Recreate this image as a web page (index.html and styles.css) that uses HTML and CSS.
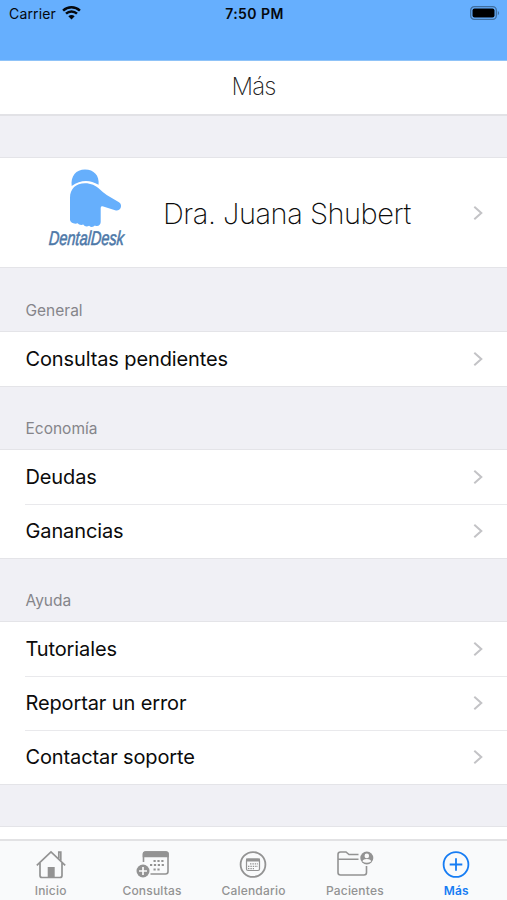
FILE: index.html
```html
<!DOCTYPE html>
<html lang="es">
<head>
<meta charset="utf-8">
<title>DentalDesk</title>
<link rel="stylesheet" href="styles.css">
</head>
<body>
<div class="app">
  <header class="status">
    <div class="carrier"><span>Carrier</span>
      <svg width="19" height="14" viewBox="0 0 19 14"><path d="M1.100 4.600C5.800.2 13.200.2 17.900 4.600M4 7.700c3.100-2.900 7.900-2.900 11 0" fill="none" stroke="#05080d" stroke-width="2.500"/><path d="M6.300 10.300Q9.500 7.600 12.700 10.300L9.500 13.500Z" fill="#05080d"/></svg>
    </div>
    <div class="time">7:50 PM</div>
    <svg class="battery" width="30" height="14" viewBox="0 0 30 14"><rect x=".7" y=".7" width="25.600" height="12.600" rx="3.600" fill="none" stroke="#3f6e9f" stroke-width="1.300"/><rect x="2.500" y="2.500" width="22" height="9" rx="2" fill="#000"/><path d="M27.800 4.700q2.600 2.300 0 4.600z" fill="#3f6e9f"/></svg>
  </header>
  <h1 class="title"><span>Más</span></h1>
  <main class="content">
    <section class="profile">
      <svg class="logo" width="82" height="86" viewBox="0 0 82 86">
        <path d="M24.700 20C23.500 10 29 3.500 38 3.500S52.500 9.500 51.600 18.800Q38 10.500 24.700 20Z" fill="#66affc"/>
        <path d="M23 32C23 22.500 29 17.300 38 17.300c6 0 10.500 2.200 15 6.200q3 3 6.700 5.500L72 36.300c2.300 1.400 2.400 3.800 1.600 5.700-.9 2.100-3.100 2.900-5.500 2.200L55.500 40.300Q53.700 39.800 53.700 42V56c0 3-2.700 5-5.800 3.500-1.500 1.600-4 2-5.800.2-2 1.300-4.600.9-5.800-1.200-2 1-4.500.3-5.500-1.200-3.500 1-7.600-.3-7.800-3.800Q23 42 23 32z" fill="#66affc"/>
        <text class="logo-text" transform="translate(1.500 78.500) skewX(-4)" textLength="75" lengthAdjust="spacingAndGlyphs">DentalDesk</text>
      </svg>
      <div class="name"><span>Dra. Juana Shubert</span></div>
      <svg class="chevron" viewBox="0 0 10 16"><path d="m1.300 1.800 7 6.200-7 6.200"/></svg>
    </section>
    <h2>General</h2>
    <ul>
      <li><span>Consultas pendientes</span><svg class="chevron" viewBox="0 0 10 16"><path d="m1.300 1.800 7 6.200-7 6.200"/></svg></li>
    </ul>
    <h2>Economía</h2>
    <ul>
      <li><span>Deudas</span><svg class="chevron" viewBox="0 0 10 16"><path d="m1.300 1.800 7 6.200-7 6.200"/></svg></li>
      <li><span>Ganancias</span><svg class="chevron" viewBox="0 0 10 16"><path d="m1.300 1.800 7 6.200-7 6.200"/></svg></li>
    </ul>
    <h2>Ayuda</h2>
    <ul>
      <li><span>Tutoriales</span><svg class="chevron" viewBox="0 0 10 16"><path d="m1.300 1.800 7 6.200-7 6.200"/></svg></li>
      <li><span>Reportar un error</span><svg class="chevron" viewBox="0 0 10 16"><path d="m1.300 1.800 7 6.200-7 6.200"/></svg></li>
      <li><span>Contactar soporte</span><svg class="chevron" viewBox="0 0 10 16"><path d="m1.300 1.800 7 6.200-7 6.200"/></svg></li>
    </ul>
    <div class="next"></div>
  </main>
  <nav class="tabs">
    <a><svg viewBox="0 0 40 32"><path d="M5.800 16.300 20 3l14.200 13.300M27.800 9.500V3.200h2V11.500M9 14v12.500q0 2 2 2h18q2 0 2-2V14" fill="none" stroke="currentColor" stroke-width="1.700"/><path d="M16.700 18h7v10h-7z" fill="currentColor"/></svg><span>Inicio</span></a>
    <a><svg viewBox="0 0 40 32"><path d="M11.500 13V5.500Q11.500 3 14 3h19.500Q36 3 36 5.500v17q0 2.500-2.500 2.500H18.500" fill="none" stroke="currentColor" stroke-width="1.600"/><path d="M10.700 8.300V5q0-2.800 2.800-2.800H34q2.800 0 2.800 2.800v3.300z" fill="currentColor"/><path d="M21.500 12h10.500M18 16h14M21.500 20.500h7" stroke="currentColor" stroke-width="2" stroke-dasharray="2.200 1.700"/><circle cx="11" cy="22" r="6.500" fill="currentColor"/><path d="M7 22h8M11 18v8" stroke="#fafafa" stroke-width="1.700"/></svg><span>Consultas</span></a>
    <a><svg viewBox="0 0 40 32"><circle cx="20" cy="15.500" r="12.400" fill="none" stroke="currentColor" stroke-width="1.800"/><rect x="13.500" y="10" width="13" height="11.500" rx="1.500" fill="none" stroke="currentColor" stroke-width="1.200"/><path d="M13 9.500h14v3H13z" fill="currentColor"/><path d="M17 14.800h8M15 17.300h10M15 19.600h6" stroke="currentColor" stroke-width="1.300" stroke-dasharray="1.400 1"/></svg><span>Calendario</span></a>
    <a><svg viewBox="0 0 40 32"><path d="M23.500 5.500H14l-3-2.500H5.500Q3 3 3 5.500v18Q3 26 5.500 26H29q2.500 0 2.500-2.500V17M3 10.300h20.500" fill="none" stroke="currentColor" stroke-width="1.600"/><circle cx="31.800" cy="9" r="6.500" fill="currentColor"/><circle cx="31.800" cy="6.900" r="2.300" fill="#fafafa"/><path d="M27.500 12.500q0-2.500 4.300-2.500t4.300 2.500q-4.300 2.500-8.600 0" fill="#fafafa"/></svg><span>Pacientes</span></a>
    <a class="active"><svg viewBox="0 0 40 32"><circle cx="20" cy="15.500" r="12.400" fill="none" stroke="currentColor" stroke-width="1.800"/><path d="M13.700 15.500h12.600M20 9.200v12.600" stroke="currentColor" stroke-width="1.800"/></svg><span>Más</span></a>
  </nav>
</div>
</body>
</html>
```
FILE: styles.css
```css
* { box-sizing: border-box; }
body { margin: 0; font-family: Inter, "Liberation Sans", sans-serif; color: #0b0b0b; }
.app { width: 507px; height: 900px; display: flex; flex-direction: column; background: #f0f0f5; overflow: hidden; }
svg { display: block; flex: none; }
.status { height: 61px; flex: none; background: #66affe; display: grid; grid-template-columns: 1fr auto 1fr; align-items: start; padding: 5px 7px 0 9px; border-bottom: 1px solid #8fc3f8; font-size: 14px; line-height: 18px; color: #05080d; }
.carrier { display: flex; gap: 6px; letter-spacing: .15px; }
.carrier svg { margin-top: 1px; }
.time { font-weight: 600; font-size: 14px; letter-spacing: .45px; }
.battery { justify-self: end; margin-top: 1px; }
.title { margin: 0; height: 55px; flex: none; background: #fff; border-bottom: 2px solid #e2e2e6; text-align: center; font-size: 24px; font-weight: 200; line-height: 52px; letter-spacing: -.8px; color: #222; }
.content { flex: 1; min-height: 0; padding-top: 41px; overflow: hidden; }
.profile { height: 111px; background: #fff; border-top: 1px solid #e4e4e8; border-bottom: 1px solid #e4e4e8; display: flex; align-items: center; padding: 0 24px 0 47px; }
.logo { margin-bottom: 7px; overflow: visible; }
.logo-text { font: italic 400 20px "Liberation Sans", sans-serif; fill: #4d78a8; stroke: #4d78a8; stroke-width: .6px; }
.name { flex: 1; padding-left: 34px; padding-top: 1px; font-size: 29px; font-weight: 200; letter-spacing: -.47px; white-space: nowrap; }
.chevron { width: 10px; height: 16px; fill: none; stroke: #c3c3c6; stroke-width: 2; }
h2 { margin: 0; height: 63px; padding: 31px 25.500px 0; font-size: 15.500px; font-weight: 400; line-height: 24px; color: #85858a; }
ul { margin: 0; padding: 0; list-style: none; background: #fff; border-top: 1px solid #e4e4e8; box-shadow: 0 1px #e4e4e8; }
li { height: 54px; display: flex; align-items: center; justify-content: space-between; margin-left: 25px; padding: 0 24px 0 .5px; font-size: 20px; letter-spacing: -.12px; }
li + li { border-top: 1px solid #e9e9ec; padding-bottom: 1px; }
.next { height: 20px; margin-top: 42px; border-top: 1px solid #e4e4e8; background: #fff; }
.tabs { height: 61px; flex: none; background: #f9fafb; border-top: 2px solid #e2e2e4; display: grid; grid-template-columns: repeat(5, 1fr); }
.tabs a { display: flex; flex-direction: column; align-items: center; padding-top: 8px; color: #939393; font-size: 12px; font-weight: 500; line-height: 15px; letter-spacing: .2px; }
.tabs svg { width: 40px; height: 32px; }
.tabs span { margin-top: 2px; }
.tabs .active { color: #167cf3; font-weight: 600; }
```
